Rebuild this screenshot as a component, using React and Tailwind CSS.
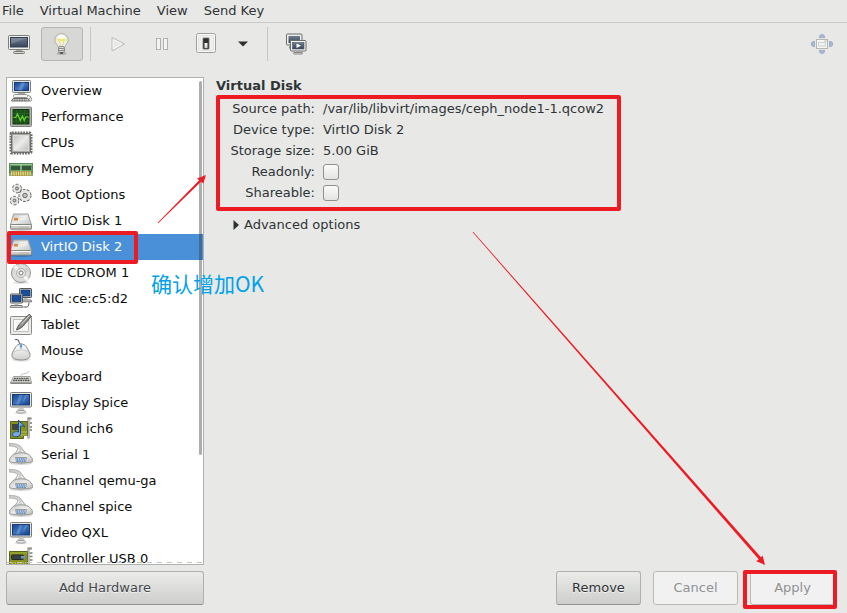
import React from "react";

/* ---------- device icons, 24 x 24 ---------- */

function Icon({ children }) {
  return (
    <svg viewBox="0 0 24 24" className="h-6 w-6 shrink-0" aria-hidden="true">
      {children}
    </svg>
  );
}

function Defs() {
  return (
    <svg className="absolute h-0 w-0" aria-hidden="true">
      <defs>
        <linearGradient id="screen" x1="0" y1="0" x2="1" y2="1">
          <stop offset="0" stopColor="#1a4593" />
          <stop offset="0.5" stopColor="#3d74bd" />
          <stop offset="1" stopColor="#12408c" />
        </linearGradient>
        <linearGradient id="slate" x1="0" y1="0" x2="0" y2="1">
          <stop offset="0" stopColor="#6d7b8d" />
          <stop offset="1" stopColor="#38475b" />
        </linearGradient>
        <linearGradient id="metal" x1="0" y1="0" x2="1" y2="1">
          <stop offset="0" stopColor="#c4c4c2" />
          <stop offset="0.5" stopColor="#ebebea" />
          <stop offset="1" stopColor="#bdbdbb" />
        </linearGradient>
        <linearGradient id="pale" x1="0" y1="0" x2="0" y2="1">
          <stop offset="0" stopColor="#ffffff" />
          <stop offset="1" stopColor="#cfcfcc" />
        </linearGradient>
        <radialGradient id="bulb">
          <stop offset="0" stopColor="#fffcb4" />
          <stop offset="0.5" stopColor="#f4f3d6" />
          <stop offset="1" stopColor="#e6e6e3" />
        </radialGradient>
      </defs>
    </svg>
  );
}

const OverviewIcon = () => (
  <Icon>
    <rect x="3.500" y="1.500" width="18" height="12" rx="1" fill="#e4e5e0" stroke="#7d7f7a" />
    <rect x="5.500" y="3.500" width="14" height="8" fill="url(#screen)" stroke="#173a78" />
    <path d="M9 11.500l3-8h4l-3 8z" fill="#7ba3d8" opacity=".5" />
    <path d="M9 14h7v2H9z" fill="#a9aaa6" />
    <rect x="4.500" y="15.500" width="14" height="3" rx="1" fill="#f4f4f2" stroke="#90928d" />
    <path d="M4 19.500h15l1.500 2.500H2.500z" fill="#d8d9d5" stroke="#6b6d69" />
    <path d="M5 21h13" stroke="#555753" strokeDasharray="1.500 1" />
    <path d="M19 16.500q3 0 3 3" fill="none" stroke="#888a85" />
    <ellipse cx="21.500" cy="20.500" rx="1.200" ry="1.800" fill="#eeeeec" stroke="#777" strokeWidth=".7" />
  </Icon>
);

const PerformanceIcon = () => (
  <Icon>
    <rect x="1.500" y="2" width="21" height="19.500" rx="1" fill="#b4b5b2" stroke="#7c7e78" />
    <rect x="4" y="4.500" width="16" height="14.500" fill="#1e4f1b" stroke="#12380f" />
    <path d="M7.500 5v14M11.500 5v14M15.500 5v14M4 8.500h16M4 12.500h16M4 16h16" stroke="#286820" strokeWidth=".7" />
    <path d="M4.500 12.500h2.200l1.800-3.500 2.800 6.500 2.200-4.500 1.700 4.500 1.600-3.500h3" fill="none" stroke="#63d62e" strokeWidth="1.200" />
  </Icon>
);

const CpuIcon = () => (
  <Icon>
    <rect x="2" y="2" width="20" height="20" rx="1" fill="none" stroke="#696b67" strokeWidth="3" strokeDasharray="1.800 1" />
    <rect x="2.500" y="2.500" width="19" height="19" rx="1" fill="#a6a8a4" stroke="#5f615d" strokeWidth=".8" />
    <rect x="4.500" y="4.500" width="15" height="15" fill="url(#metal)" stroke="#dcdddb" />
  </Icon>
);

const MemoryIcon = () => (
  <Icon>
    <rect x=".5" y="6.500" width="23" height="9" fill="#64a063" stroke="#5c8a5a" />
    <path d="M1 7.500h22" stroke="#9cc59b" />
    <rect x="2" y="9" width="9.500" height="4" fill="#355838" />
    <rect x="12.500" y="9" width="9.500" height="4" fill="#355838" />
    <path d="M12 7v8" stroke="#b5d6b1" />
    <rect x="2" y="14" width="20" height="5" fill="#9d9140" />
    <path d="M2 16.500h20" stroke="#e4da86" strokeWidth="4" strokeDasharray="1.300 1" />
    <path d="M1 15v4M23 15v4" stroke="#5d8b59" strokeWidth="1.500" />
  </Icon>
);

function Gear({ x, y, r }) {
  return (
    <g transform={`translate(${x} ${y})`}>
      <circle r={r} fill="#dededc" stroke="#50524e" strokeWidth="3" strokeDasharray="2.300 1.200" />
      <circle r={r} fill="#e9e9e7" stroke="#e2e2e0" strokeWidth="1.400" />
      <circle r={r * 0.45} fill="#c2c3c0" stroke="#5b5d59" strokeWidth=".9" />
    </g>
  );
}

const BootIcon = () => (
  <Icon>
    <Gear x={8} y={5.5} r={3.3} />
    <Gear x={5.5} y={17.5} r={3.3} />
    <Gear x={16} y={12.5} r={5} />
  </Icon>
);

const DiskIcon = () => (
  <Icon>
    <ellipse cx="12" cy="20.500" rx="11.500" ry="1.500" fill="#000" opacity=".18" />
    <path d="M4.500 5h14.500L22.500 16H1.500z" fill="url(#metal)" stroke="#a09f9b" />
    <rect x="1.500" y="15.500" width="21" height="4.500" rx="1" fill="#cfcdc8" stroke="#85867f" />
    <path d="M2.500 16.500h19" stroke="#fbfbfa" />
    <path d="M10.500 18.200h9" stroke="#9fa09c" strokeDasharray="1 1" />
    <rect x="5" y="9" width="4" height="2.500" fill="#dd8440" />
    <path d="M10 7.500h6M10 10h7" stroke="#fff" opacity=".5" />
  </Icon>
);

const CdIcon = () => (
  <Icon>
    <ellipse cx="12" cy="21.500" rx="8" ry="1.500" fill="#000" opacity=".12" />
    <circle cx="12" cy="12" r="9.500" fill="#dcdcda" stroke="#92948f" />
    <path d="M12 12L4 6.500 7 3.800zM12 12l8 5.500-3 3z" fill="#f5f5f4" />
    <path d="M12 12l7-7 2 5z" fill="#cfd0cd" />
    <circle cx="12" cy="12" r="4.500" fill="#e6e6e4" stroke="#a6a8a4" strokeWidth=".8" />
    <circle cx="12" cy="12" r="2" fill="#fff" stroke="#777974" />
  </Icon>
);

function SmallPc({ x, y }) {
  return (
    <g transform={`translate(${x} ${y})`}>
      <rect x=".5" y=".5" width="12" height="9" rx=".6" fill="#d8d9d4" stroke="#555753" />
      <rect x="2" y="2" width="9" height="6" fill="#1c4f9b" stroke="#102f63" strokeWidth=".7" />
      <path d="M4.500 10h4v1.500h-4z" fill="#bdbeba" />
      <path d="M1 12h11l.8 1.800H.2z" fill="#e6e6e3" stroke="#666864" strokeWidth=".9" />
    </g>
  );
}

const NicIcon = () => (
  <Icon>
    <SmallPc x={10} y={1} />
    <SmallPc x={1} y={6.5} />
    <path d="M14.500 20h3.500q2 0 2-4.500" fill="none" stroke="#555753" />
  </Icon>
);

const TabletIcon = () => (
  <Icon>
    <rect x="1.500" y="3.500" width="21" height="18" rx="1" fill="#ececea" stroke="#8a8c87" />
    <rect x="4.500" y="6.500" width="15" height="12" fill="#f8f8f7" stroke="#bfc0bc" />
    <path d="M7.500 17c1-3.500 2-4.500 3.500-6.500L20 1.200l2.500 2-8.500 10c-1.600 1.700-3 2.500-6.500 3.800z" fill="#8a8c88" stroke="#4b4d4a" strokeWidth=".9" />
    <path d="M12 11.500l8.500-9" stroke="#e8e8e6" />
  </Icon>
);

const MouseIcon = () => (
  <Icon>
    <path d="M6 .8c2.500-.8 4 .5 4 2.300s2 1.400 2 4" fill="none" stroke="#596068" strokeWidth="1.100" />
    <ellipse cx="12" cy="20.500" rx="9" ry="2" fill="#000" opacity=".13" />
    <path d="M12 5c5 0 6 4.500 8.500 8.500 2 4.500-1 7.500-8.500 7.500s-10.500-3-8.500-7.500C6 9.500 7 5 12 5z" fill="url(#pale)" stroke="#8b8d89" />
    <path d="M4 14.500c2.500-3 5-3.500 8-3.500s5.500.5 8 3.500" fill="none" stroke="#cbccc9" />
    <path d="M12 4.500v5M10.700 7h2.600" stroke="#5b97d8" strokeWidth="1.400" />
  </Icon>
);

const KeyboardIcon = () => (
  <Icon>
    <path d="M12 11.500c0-3 1.500-2.500 4-3s4-1 3.500-2.500" fill="none" stroke="#c3c4c1" />
    <path d="M4.500 11.500h16.500l1.500 6.500H1.500z" fill="#dededc" stroke="#a0a29d" />
    <path d="M5 13.500h15M4 15.500h17" stroke="#555753" strokeWidth="1.400" strokeDasharray="1.800 .6" />
    <path d="M1.500 17.500h21v1.500h-21z" fill="#858782" />
  </Icon>
);

const DisplayIcon = () => (
  <Icon>
    <ellipse cx="12" cy="22" rx="7" ry="1.200" fill="#000" opacity=".12" />
    <path d="M9.500 17h5l1 3h-7z" fill="#c9cac6" />
    <ellipse cx="12" cy="20.800" rx="4.800" ry="1.300" fill="#eeeeec" stroke="#888a85" strokeWidth=".8" />
    <rect x="1.500" y="1.500" width="21" height="14.500" rx="1" fill="#e8e8e2" stroke="#777972" />
    <rect x="3.500" y="3.500" width="17" height="10.500" fill="url(#screen)" stroke="#173a78" />
    <path d="M7 13.500l3.500-9.500h3l-3.500 9.500zM14 10l2.500-6h1.500l-3 7z" fill="#8db0de" opacity=".4" />
  </Icon>
);

const SoundIcon = () => (
  <Icon>
    <path d="M1.500 4.500h17v14h-4v3h-13z" fill="#85901f" stroke="#5b6418" />
    <path d="M3 7h6v6H3z" fill="#3c4444" />
    <path d="M12 18h6M12 15h6" stroke="#c3c95a" />
    <path d="M22.500 1.500h-3v20" fill="none" stroke="#6e706c" strokeWidth="2" />
    <path d="M22.500 2h-3v19" fill="none" stroke="#c5c6c3" strokeWidth=".8" />
    <path d="M21 6h2M21 10h2M21 13h2" stroke="#777974" strokeWidth="1.500" />
    <path d="M9.500 3c1 3 4.500 3 6.500 7-1.500-1-3-1.500-4.500-1v7.500c0 4-8 4.500-8 1 0-2.500 3.500-3.500 6-2.500z" fill="#77a9e4" stroke="#1d4b88" />
  </Icon>
);

const SerialIcon = () => (
  <Icon>
    <ellipse cx="12" cy="20.500" rx="11" ry="1.500" fill="#000" opacity=".16" />
    <path d="M0 .5C7 .5 11 1.500 13 5.500l5 6.500H5l4-6C7.500 3.500 4 3 0 3z" fill="#d0d1ce" stroke="#a7a9a5" strokeWidth=".9" />
    <path d="M10 6L7.500 11.500M12.500 7l2.500 4.500" stroke="#f6f6f5" />
    <path d="M4 11.500q8-3.500 16 0l3.300 4v3.500q-11.300 2.500-22.600 0v-3.500z" fill="url(#metal)" stroke="#9a9c98" />
    <path d="M6.500 14.500h11l-1 4.500h-9z" fill="#dfe3e8" stroke="#8a8c88" strokeWidth=".8" />
    <path d="M7.500 16h9M8 18h8" stroke="#4f84c6" strokeWidth="1.400" strokeDasharray="1.600 .6" />
  </Icon>
);

const ControllerIcon = () => (
  <Icon>
    <path d="M.5 4.500h18v15H.5z" fill="#85901f" stroke="#5b6418" />
    <path d="M1 6h17" stroke="#a4b03c" />
    <rect x="2.500" y="8" width="12" height="4.500" rx="1" fill="#3b4243" stroke="#262a2a" />
    <rect x="12" y="9" width="4" height="2.500" fill="#6e97c9" />
    <path d="M3 16h14" stroke="#b3b94e" strokeWidth="2.500" strokeDasharray="1.300 1.300" />
    <path d="M23 1.500h-3.500v20" fill="none" stroke="#777974" strokeWidth="2" />
    <path d="M23 2h-3.500v19" fill="none" stroke="#c5c6c3" strokeWidth=".8" />
    <path d="M21 6h2.500M21 9.500h2.500M21 13h2.500" stroke="#777974" strokeWidth="1.500" />
  </Icon>
);

const devices = [
  ["Overview", OverviewIcon],
  ["Performance", PerformanceIcon],
  ["CPUs", CpuIcon],
  ["Memory", MemoryIcon],
  ["Boot Options", BootIcon],
  ["VirtIO Disk 1", DiskIcon],
  ["VirtIO Disk 2", DiskIcon],
  ["IDE CDROM 1", CdIcon],
  ["NIC :ce:c5:d2", NicIcon],
  ["Tablet", TabletIcon],
  ["Mouse", MouseIcon],
  ["Keyboard", KeyboardIcon],
  ["Display Spice", DisplayIcon],
  ["Sound ich6", SoundIcon],
  ["Serial 1", SerialIcon],
  ["Channel qemu-ga", SerialIcon],
  ["Channel spice", SerialIcon],
  ["Video QXL", DisplayIcon],
  ["Controller USB 0", ControllerIcon],
];

/* ---------- toolbar ---------- */

function ToolButton({ label, active, narrow, children }) {
  return (
    <button
      type="button"
      aria-label={label}
      aria-pressed={active}
      className={
        "flex h-[34px] shrink-0 items-center justify-center rounded-[3px] border " +
        (narrow ? "w-7 " : "w-[42px] ") +
        (active ? "border-[#b4b4b1] bg-[#d7d7d5]" : "border-transparent")
      }
    >
      {children}
    </button>
  );
}

function Toolbar() {
  return (
    <div className="flex items-center pt-1" role="toolbar">
      <div className="-ml-0.5 flex gap-px">
        <ToolButton label="Console">
          <svg viewBox="0 0 24 24" className="h-6 w-6">
            <rect x="1.500" y="3.500" width="21" height="14" rx="1" fill="#f0f0ee" stroke="#7d7f7b" />
            <rect x="3.500" y="5.500" width="17" height="9.500" fill="url(#slate)" stroke="#333e4d" />
            <path d="M4 6h16l-16 6z" fill="#a6b1bf" opacity=".35" />
            <path d="M9 18h6v2H9z" fill="#a9aaa7" />
            <rect x="6.500" y="19.500" width="11" height="2" rx="1" fill="#d9d9d6" stroke="#747672" />
          </svg>
        </ToolButton>
        <ToolButton label="Details" active>
          <svg viewBox="0 0 24 24" className="h-6 w-6">
            <ellipse cx="11.500" cy="21.500" rx="5" ry="1.300" fill="#000" opacity=".2" />
            <path d="M11.500 1.500a6.700 6.700 0 0 1 6.700 6.700c0 3.300-3 4.300-3.500 7.300H8.300c-.5-3-3.500-4-3.500-7.300a6.700 6.700 0 0 1 6.700-6.700z" fill="url(#bulb)" stroke="#aeb0ab" />
            <path d="M7.500 7.500q1 1.500 2 0 2 2 4 0 1 1.500 2 0" fill="none" stroke="#efe258" strokeWidth="1.300" />
            <path d="M9.500 9l1 6M13.500 9l-1 6" stroke="#d9d7b4" />
            <ellipse cx="11.500" cy="4.800" rx="4" ry="1.800" fill="#fff" opacity=".7" />
            <rect x="8.500" y="14.500" width="6" height="6" rx="1.500" fill="#d8d9d5" stroke="#8c8e89" />
            <path d="M9 16.500h5M9 18.500h5" stroke="#8c8e89" />
            <path d="M10 21h3" stroke="#424441" strokeWidth="1.500" />
          </svg>
        </ToolButton>
      </div>
      <div className="ml-[7px] mr-1.5 h-[34px] w-px bg-[#c6c6c4]" />
      <div className="flex gap-0.5">
        <ToolButton label="Run">
          <svg viewBox="0 0 24 24" className="h-6 w-6">
            <path d="M6 5.500L18.500 12 6 19z" fill="#e8e8e5" stroke="#bcbdba" strokeLinejoin="round" />
            <path d="M7.200 7.500L16 12l-8.800 5z" fill="none" stroke="#fff" strokeWidth=".7" />
          </svg>
        </ToolButton>
        <ToolButton label="Pause">
          <svg viewBox="0 0 24 24" className="h-6 w-6">
            <rect x="6.500" y="6.500" width="4" height="11" fill="#f3f3f1" stroke="#b1b2af" />
            <rect x="13.500" y="6.500" width="4" height="11" fill="#f3f3f1" stroke="#b1b2af" />
          </svg>
        </ToolButton>
        <ToolButton label="Shut Down">
          <svg viewBox="0 0 24 24" className="h-6 w-6">
            <rect x="2.500" y="1.500" width="19" height="19" rx="2" fill="#fafaf9" stroke="#9c9e9a" />
            <rect x="4.500" y="3.500" width="15" height="15" rx="1" fill="#efefed" stroke="#e2e2e0" />
            <rect x="9" y="6" width="6" height="11" rx=".5" fill="#303231" stroke="#6c6e6b" strokeWidth=".8" />
            <path d="M10.500 11h3v5h-3z" fill="url(#pale)" />
          </svg>
        </ToolButton>
        <ToolButton label="Shut down menu" narrow>
          <svg viewBox="0 0 10 6" className="h-1.5 w-2.5">
            <path d="M0 .5h10L5 5.500z" fill="#2b2f31" />
          </svg>
        </ToolButton>
      </div>
      <div className="ml-2.5 mr-2 h-[34px] w-px bg-[#c6c6c4]" />
      <ToolButton label="Snapshots">
        <svg viewBox="0 0 24 24" className="h-6 w-6">
          <rect x="1.500" y="2" width="15.500" height="11" rx="1" fill="#eeeeec" stroke="#6b6d6a" />
          <rect x="3.500" y="4" width="11.500" height="7" fill="url(#slate)" />
          <path d="M4 15.500h4" stroke="#888a85" strokeWidth="2" />
          <rect x="5.500" y="8.500" width="15.500" height="10.500" rx="1" fill="#f4f4f2" stroke="#6b6d6a" />
          <rect x="7.500" y="10.500" width="11.500" height="6.500" fill="url(#slate)" stroke="#48566a" strokeWidth=".6" />
          <path d="M11.500 11.500l4.500 2.300-4.500 2.200z" fill="#fff" />
          <path d="M11 19.500h4v1.500h-4z" fill="#a2a4a0" />
          <rect x="8.500" y="20.500" width="9" height="1.500" rx=".5" fill="#dcdcd9" stroke="#777974" strokeWidth=".8" />
        </svg>
      </ToolButton>
      <div className="ml-auto mr-1">
        <ToolButton label="Fullscreen">
          <svg viewBox="0 0 24 24" className="h-6 w-6">
            <g fill="#a9bdd8" stroke="#8fa4c3" strokeWidth=".8">
              <path d="M9.300 5.500a2.700 3 0 0 1 5.400 0z" />
              <path d="M9.300 18.500a2.700 3 0 0 0 5.400 0z" />
              <path d="M4.500 9.300a3.200 2.700 0 0 0 0 5.400z" />
              <path d="M19.500 9.300a3.200 2.700 0 0 1 0 5.400z" />
            </g>
            <rect x="6.500" y="7.500" width="11" height="9" fill="#f5f5f3" stroke="#b5b6b3" />
            <rect x="8.500" y="10.500" width="7" height="3.500" fill="#f3f3f1" stroke="#d0d0cd" />
            <path d="M14.500 9h2" stroke="#a9aba7" />
          </svg>
        </ToolButton>
      </div>
    </div>
  );
}

/* ---------- panels ---------- */

function DeviceList() {
  return (
    <div className="relative min-h-0 flex-1 overflow-hidden border border-[#b0b2ae] bg-white">
      <ul className="h-0">
        {devices.map(([name, Glyph]) => {
          const selected = name === "VirtIO Disk 2";
          return (
            <li key={name}>
              <button
                type="button"
                aria-current={selected}
                className={
                  "flex h-[26px] w-full items-center gap-2 pl-0.5 text-left " +
                  (selected ? "bg-[#4a90d9] text-white" : "text-[#0c0c0c]")
                }
              >
                <Glyph />
                <span>{name}</span>
              </button>
            </li>
          );
        })}
      </ul>
      {/* overlay scrollbar */}
      <div className="absolute right-px top-[3px] h-[77%] w-[3px] rounded-full bg-[#2e3436]/40" />
      {/* overflow hint */}
      <div className="absolute inset-x-0 bottom-px h-px bg-[repeating-linear-gradient(90deg,#c4c4c4_0px,#c4c4c4_5px,transparent_5px,transparent_10px)]" />
    </div>
  );
}

function PushButton({ children, disabled, wide }) {
  return (
    <button
      type="button"
      disabled={disabled}
      className={
        "h-[34px] rounded-[3px] border " +
        (wide ? "w-full " : "w-[85px] ") +
        (disabled
          ? "border-[#b9bab7] bg-[#f1f1f1] text-[#8f9291]"
          : "border-[#b0b1ae] border-b-[#92948f] bg-linear-to-b from-[#ebebea] to-[#cececc] [text-shadow:0_1px_0_#f4f4f4] " +
            (wide ? "text-[#43494b]" : "text-[#2e3436]"))
      }
    >
      {children}
    </button>
  );
}

const tick =
  "block h-4 w-4 appearance-none rounded-[3px] border border-[#8f918e] bg-linear-to-b from-[#fbfbfb] to-[#e4e4e2]";

function DiskDetails() {
  return (
    <section className="flex flex-1 flex-col items-start">
      <h1 className="text-[13px] font-bold leading-[18px]">Virtual Disk</h1>
      <div className="relative w-[405px] pb-2 pt-[3px]">
        <div className="ml-[15px] grid auto-rows-[21px] grid-cols-[84px_1fr] items-center gap-x-2 whitespace-nowrap">
          <span className="justify-self-end">Source path:</span>
          <span>/var/lib/libvirt/images/ceph_node1-1.qcow2</span>
          <span className="justify-self-end">Device type:</span>
          <span>VirtIO Disk 2</span>
          <span className="justify-self-end">Storage size:</span>
          <span>5.00 GiB</span>
          <label htmlFor="readonly" className="justify-self-end">Readonly:</label>
          <input id="readonly" type="checkbox" className={tick} />
          <label htmlFor="shareable" className="justify-self-end">Shareable:</label>
          <input id="shareable" type="checkbox" className={tick} />
        </div>
        <div className="pointer-events-none absolute inset-0 rounded-[2px] border-4 border-[#ed1c24]" />
      </div>
      <button type="button" aria-expanded="false" className="ml-[17px] mt-[5px] flex h-[18px] items-center gap-[5px]">
        <svg viewBox="0 0 6 10" className="h-2.5 w-1.5" aria-hidden="true">
          <path d="M.5 0L6 5 .5 10z" fill="#2e3436" />
        </svg>
        Advanced options
      </button>
    </section>
  );
}

export default function App() {
  return (
    <div className="relative flex h-screen flex-col overflow-hidden bg-[#e8e8e6] font-['DejaVu_Sans',sans-serif] text-[13px] leading-[18px] text-[#2e3436]">
      <Defs />
      <nav className="flex h-[23px] items-center gap-4 border-b border-[#cbcbc9] pl-0.5">
        <button type="button">File</button>
        <button type="button">Virtual Machine</button>
        <button type="button">View</button>
        <button type="button">Send Key</button>
      </nav>
      <Toolbar />

      <main className="mt-4 flex min-h-0 flex-1 gap-3 pb-2 pl-1.5 pr-3">
        <aside className="flex w-[198px] shrink-0 flex-col gap-1.5">
          <DeviceList />
          <PushButton wide>Add Hardware</PushButton>
        </aside>
        <div className="flex min-w-0 flex-1 flex-col">
          <DiskDetails />
          <div className="flex justify-end gap-3">
            <PushButton>Remove</PushButton>
            <PushButton disabled>Cancel</PushButton>
            <div className="relative">
              <PushButton disabled>Apply</PushButton>
              <div className="pointer-events-none absolute -bottom-1 -left-[7px] -right-0.5 -top-px rounded-[2px] border-4 border-[#ed1c24]" />
            </div>
          </div>
        </div>
      </main>

      {/* annotations drawn over the window */}
      <div className="pointer-events-none absolute left-[7px] top-[231px] h-[33px] w-[131px] rounded-[2px] border-[4px] border-[#ed1c24]" />
      <p className="pointer-events-none absolute left-[151px] top-[269px] whitespace-nowrap font-['Noto_Sans_CJK_SC',sans-serif] text-[21px] leading-[28px] text-[#00a2e8]">
        确认增加OK
      </p>
      <svg className="pointer-events-none absolute left-0 top-0 h-[613px] w-[847px]" viewBox="0 0 847 613" fill="#ed1c24" aria-hidden="true">
        <path d="M157.600 222.700L199.200 180.200 197 178.500 206 175 203.300 183.500 201 181.800 158.200 223.300z" />
        <path d="M472.700 232.300L758.700 559.300 756.300 561.200 765 565 762.600 555.600 760.900 557.300 473.200 231.800z" />
      </svg>
    </div>
  );
}
